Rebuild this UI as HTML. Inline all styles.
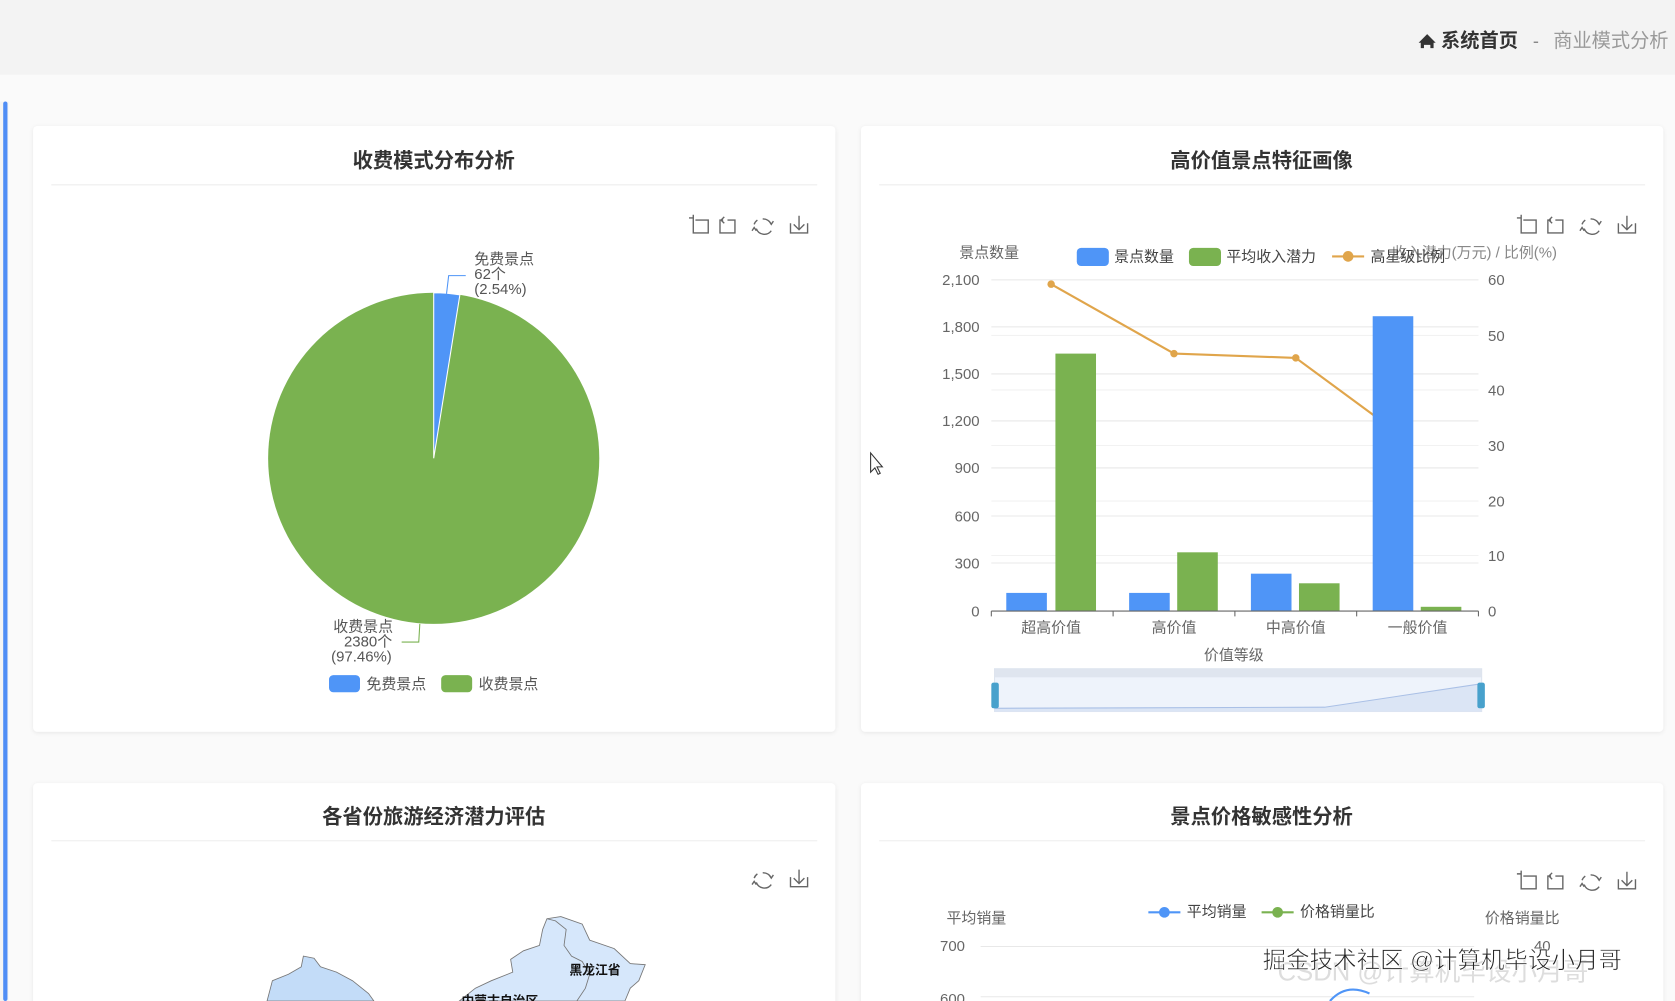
<!DOCTYPE html>
<html><head><meta charset="utf-8"><style>
html,body{margin:0;padding:0;background:#f7f7f7;}
svg{display:block;}
text{font-family:"Liberation Sans","Noto Sans CJK SC",sans-serif;}
</style></head><body>
<svg width="1675" height="1001" viewBox="0 0 1568 937" preserveAspectRatio="none" xmlns="http://www.w3.org/2000/svg">
<defs>
<filter id="sh" x="-5%" y="-5%" width="110%" height="110%"><feDropShadow dx="0" dy="1" stdDeviation="2" flood-color="#000" flood-opacity="0.08"/></filter>
<g id="tb4" fill="none" stroke="#666" stroke-width="1.3">
<path d="M0 2h4v-3M4 2v14h14V4H6"/>
<path d="M32 4h-3v12h14V4H36M33 1l-3 3 3 3"/>
<path d="M69 3a8 8 0 0 1 8 5M75 5l2 3 2-3M77 14a8 8 0 0 1-14-2M63 14l-2-3-2 3M61 8a8 8 0 0 1 3-4"/>
<path d="M95 7v9h16V7M103 0v12M98 8l5 5 5-5"/>
</g>
</defs>
<rect x="0" y="0" width="1568" height="70" fill="#f3f3f3"/>
<rect x="0" y="70" width="1568" height="867" fill="#fafafa"/>
<rect x="0" y="95" width="8" height="842" fill="#f4f4f4"/>
<rect x="3" y="95" width="4" height="842" fill="#4f8df5" rx="2"/>
<path d="M1328 40l8-8 8 8h-2v5h-3v-3h-6v3h-3v-5z" fill="#333"/>
<text x="1349" y="44" font-size="18" font-weight="bold" fill="#333">系统首页</text>
<text x="1435" y="44" font-size="17" fill="#888">-</text>
<text x="1454" y="44" font-size="18" fill="#999">商业模式分析</text>

<rect x="31" y="118" width="751" height="567" rx="4" fill="#fff" filter="url(#sh)"/>
<rect x="806" y="118" width="751" height="567" rx="4" fill="#fff" filter="url(#sh)"/>
<rect x="31" y="733" width="751" height="220" rx="4" fill="#fff" filter="url(#sh)"/>
<rect x="806" y="733" width="751" height="220" rx="4" fill="#fff" filter="url(#sh)"/>
<line x1="48" y1="173" x2="765" y2="173" stroke="#eee"/>
<line x1="823" y1="173" x2="1540" y2="173" stroke="#eee"/>
<line x1="48" y1="787" x2="765" y2="787" stroke="#eee"/>
<line x1="823" y1="787" x2="1540" y2="787" stroke="#eee"/>
<g font-size="19" font-weight="bold" fill="#333" text-anchor="middle">
<text x="406" y="157">收费模式分布分析</text>
<text x="1181" y="157">高价值景点特征画像</text>
<text x="406" y="771">各省份旅游经济潜力评估</text>
<text x="1181" y="771">景点价格敏感性分析</text>
</g>
<use href="#tb4" x="645" y="202"/>
<use href="#tb4" x="1420" y="202"/>
<use href="#tb4" x="1420" y="816"/>
<g fill="none" stroke="#666" stroke-width="1.3">
<path d="M714 817a8 8 0 0 1 8 5M720 819l2 3 2-3M722 828a8 8 0 0 1-14-2M708 828l-2-3-2 3M706 822a8 8 0 0 1 3-4"/>
<path d="M740 821v9h16v-9M748 814v12M743 822l5 5 5-5"/>
</g>

<circle cx="406" cy="429" r="155" fill="#7ab250"/>
<path d="M406 429L406 274A155 155 0 0 1 430.5 276Z" fill="#4f95f7" stroke="#fff" stroke-width="1"/>
<path d="M418 275l2-17h16" fill="none" stroke="#4f95f7"/>
<path d="M393 584l-1 17h-16" fill="none" stroke="#7ab250"/>
<g font-size="14" fill="#555">
<text x="444" y="247">免费景点</text><text x="444" y="261">62个</text><text x="444" y="275">(2.54%)</text>
<text x="312" y="591">收费景点</text><text x="322" y="605">2380个</text><text x="310" y="619">(97.46%)</text>
</g>
<rect x="308" y="632" width="29" height="16" rx="4" fill="#4f95f7"/>
<text x="343" y="645" font-size="14" fill="#555">免费景点</text>
<rect x="413" y="632" width="29" height="16" rx="4" fill="#7ab250"/>
<text x="448" y="645" font-size="14" fill="#555">收费景点</text>

<g stroke="#e8e8e8">
<line x1="928" y1="262" x2="1384" y2="262"/><line x1="928" y1="306" x2="1384" y2="306"/>
<line x1="928" y1="350" x2="1384" y2="350"/><line x1="928" y1="394" x2="1384" y2="394"/>
<line x1="928" y1="438" x2="1384" y2="438"/><line x1="928" y1="483" x2="1384" y2="483"/>
<line x1="928" y1="527" x2="1384" y2="527"/>
<line x1="928" y1="314" x2="1384" y2="314" stroke="#f2f2f2"/><line x1="928" y1="365" x2="1384" y2="365" stroke="#f2f2f2"/>
<line x1="928" y1="417" x2="1384" y2="417" stroke="#f2f2f2"/><line x1="928" y1="469" x2="1384" y2="469" stroke="#f2f2f2"/>
<line x1="928" y1="520" x2="1384" y2="520" stroke="#f2f2f2"/>
</g>
<g font-size="14" fill="#666" text-anchor="end">
<text x="917" y="267">2,100</text><text x="917" y="311">1,800</text><text x="917" y="355">1,500</text>
<text x="917" y="399">1,200</text><text x="917" y="443">900</text><text x="917" y="488">600</text>
<text x="917" y="532">300</text><text x="917" y="577">0</text>
</g>
<g font-size="14" fill="#666">
<text x="1393" y="267">60</text><text x="1393" y="319">50</text><text x="1393" y="370">40</text>
<text x="1393" y="422">30</text><text x="1393" y="474">20</text><text x="1393" y="525">10</text><text x="1393" y="577">0</text>
<text x="898" y="241">景点数量</text>
<text x="1303" y="241" fill="#888">收入潜力(万元) / 比例(%)</text>
</g>
<path d="M984 266L1099 331L1213 335L1285 388L1305 403" fill="none" stroke="#e0a54b" stroke-width="2"/>
<circle cx="984" cy="266" r="3.5" fill="#e0a54b"/><circle cx="1099" cy="331" r="3.5" fill="#e0a54b"/><circle cx="1213" cy="335" r="3.5" fill="#e0a54b"/>
<g fill="#4f95f7">
<rect x="942" y="555" width="38" height="17"/><rect x="1057" y="555" width="38" height="17"/>
<rect x="1171" y="537" width="38" height="35"/><rect x="1285" y="296" width="38" height="276"/>
</g>
<g fill="#7ab250">
<rect x="988" y="331" width="38" height="241"/><rect x="1102" y="517" width="38" height="55"/>
<rect x="1216" y="546" width="38" height="26"/><rect x="1330" y="568" width="38" height="4"/>
</g>
<path d="M928 572H1384M928 572v5M1042 572v5M1156 572v5M1270 572v5M1384 572v5" stroke="#666" fill="none"/>
<g font-size="14" fill="#666" text-anchor="middle">
<text x="984" y="592">超高价值</text><text x="1099" y="592">高价值</text><text x="1213" y="592">中高价值</text><text x="1327" y="592">一般价值</text>
<text x="1155" y="618">价值等级</text>
</g>
<rect x="1008" y="232" width="30" height="17" rx="4" fill="#4f95f7"/>
<text x="1043" y="245" font-size="14" fill="#444">景点数量</text>
<rect x="1113" y="232" width="30" height="17" rx="4" fill="#7ab250"/>
<text x="1148" y="245" font-size="14" fill="#444">平均收入潜力</text>
<line x1="1247" y1="240" x2="1277" y2="240" stroke="#e0a54b" stroke-width="2"/><circle cx="1262" cy="240" r="5" fill="#e0a54b"/>
<text x="1283" y="245" font-size="14" fill="#444">高星级比例</text>
<rect x="931" y="626" width="456" height="40" fill="#eef3fb" stroke="#dde4ee"/>
<rect x="931" y="626" width="456" height="8" fill="#dfe5ef"/>
<path d="M931 663L1240 662L1387 640V666H931Z" fill="#dbe5f5"/>
<path d="M931 663L1240 662L1387 640" fill="none" stroke="#aac0e6"/>
<rect x="928" y="639" width="7" height="24" rx="2" fill="#48a1cc"/>
<rect x="1383" y="639" width="7" height="24" rx="2" fill="#48a1cc"/>

<path d="M250 937L255 918L270 912L282 905L284 895L294 897L300 905L315 910L330 918L345 930L350 937Z" fill="#c3dcf8" stroke="#777" stroke-width="0.8"/>
<path d="M430 937L445 925L460 918L480 910L478 898L490 890L505 885L508 870L512 860L525 858L545 865L552 880L575 888L590 902L604 903L598 918L590 925L585 937Z" fill="#d6e7fb" stroke="#777" stroke-width="0.8"/>
<path d="M512 860L520 862L530 870L528 885L535 895L545 900L552 912L548 925L540 937" fill="none" stroke="#777" stroke-width="0.8"/>
<text x="533" y="912" font-size="12" font-weight="bold" fill="#111">黑龙江省</text>
<text x="432" y="941" font-size="12" font-weight="bold" fill="#111">内蒙古自治区</text>

<g font-size="14" fill="#666">
<text x="886" y="864">平均销量</text><text x="1390" y="864">价格销量比</text>
<text x="880" y="890">700</text><text x="880" y="940">600</text>
<text x="1436" y="890">40</text>
</g>
<line x1="918" y1="886" x2="1380" y2="886" stroke="#e8e8e8"/>
<line x1="918" y1="933" x2="1380" y2="933" stroke="#e8e8e8"/>
<line x1="1075" y1="854" x2="1105" y2="854" stroke="#4f95f7" stroke-width="2"/><circle cx="1090" cy="854" r="5" fill="#4f95f7"/>
<text x="1111" y="858" font-size="14" fill="#444">平均销量</text>
<line x1="1181" y1="854" x2="1211" y2="854" stroke="#7ab250" stroke-width="2"/><circle cx="1196" cy="854" r="5" fill="#7ab250"/>
<text x="1217" y="858" font-size="14" fill="#444">价格销量比</text>
<path d="M1245 937Q1260 920 1282 930" fill="none" stroke="#4f95f7" stroke-width="2"/>
<text x="1196" y="918" font-size="24" fill="#ddd">CSDN @计算机毕设小月哥</text>
<text x="1182" y="906" font-size="22" fill="#222" stroke="#fff" stroke-width="0.6">掘金技术社区 @计算机毕设小月哥</text>
<path d="M815 424v18l4-4 3 6 2-1-3-6h5z" fill="#fff" stroke="#333" stroke-width="1"/>
</svg>
</body></html>
